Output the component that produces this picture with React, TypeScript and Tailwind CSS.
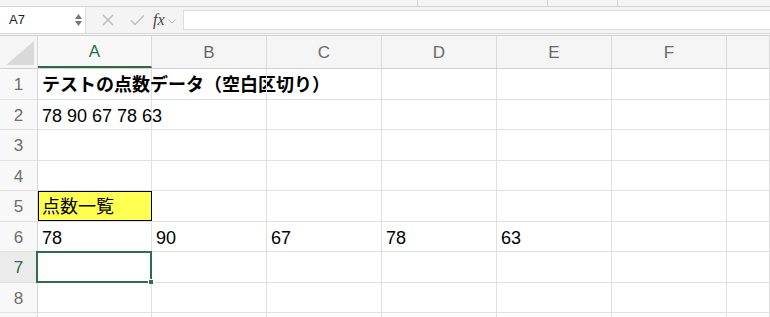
import React from 'react'

const cols = ['A', 'B', 'C', 'D', 'E', 'F', '']
const colW = ['w-[114px]', 'w-[115px]', 'w-[115px]', 'w-[115px]', 'w-[115px]', 'w-[115px]', 'flex-1']
const rowH = ['h-[31px]', 'h-[30px]', 'h-[31px]', 'h-[30px]', 'h-[31px]', 'h-[30px]', 'h-[31px]', 'h-[30px]', 'h-[31px]']

// セルの内容
const cells: Record<string, string> = {
  A1: 'テストの点数データ（空白区切り）',
  A2: '78 90 67 78 63',
  A5: '点数一覧',
  A6: '78',
  B6: '90',
  C6: '67',
  D6: '78',
  E6: '63',
}

const font = { fontFamily: '"Liberation Sans", "Noto Sans CJK JP", sans-serif' }

const App = () => {
  return (
    <div className="w-[770px] h-[317px] overflow-hidden bg-white text-black" style={font}>
      {/* ツールバーの名残り */}
      <div className="h-[7px] bg-[#f4f4f4] border-b border-[#d4d4d4] flex">
        <div className="w-[417px]" />
        <div className="w-px bg-[#d4d4d4]" />
        <div className="w-[129px]" />
        <div className="w-px bg-[#d4d4d4]" />
        <div className="w-[69px]" />
        <div className="w-px bg-[#d4d4d4]" />
      </div>

      {/* 数式バー */}
      <div className="h-[27px] bg-[#f4f4f4] flex items-stretch border-b border-[#d9d9d9]">
        <div className="w-[86px] bg-white border-r border-[#dcdcdc] flex items-center justify-between pl-[9px] pr-[3px]">
          <span className="text-[13px] text-[#222]">A7</span>
          <div className="flex flex-col items-center gap-[2px]">
            <svg width="7" height="5" viewBox="0 0 7 5"><path d="M3.5 0L7 5H0z" fill="#777" /></svg>
            <svg width="7" height="5" viewBox="0 0 7 5"><path d="M0 0h7L3.5 5z" fill="#777" /></svg>
          </div>
        </div>
        <div className="w-[97px] flex items-center pl-[16px]">
          <svg width="12" height="12" viewBox="0 0 12 12" className="mr-[16px]">
            <path d="M1 1L11 11M11 1L1 11" stroke="#bdbdbd" strokeWidth="1.5" />
          </svg>
          <svg width="15" height="12" viewBox="0 0 15 12" className="mr-[8px]">
            <path d="M1 6.5L5 10.5L14 1.5" stroke="#bdbdbd" strokeWidth="1.5" fill="none" />
          </svg>
          <span className="text-[16px] italic text-[#444] leading-none" style={{ fontFamily: '"Liberation Serif", serif' }}>fx</span>
          <svg width="8" height="5" viewBox="0 0 8 5" className="ml-[3px] mt-[2px]">
            <path d="M0.5 0.5L4 4L7.5 0.5" stroke="#b0b0b0" strokeWidth="1" fill="none" />
          </svg>
        </div>
        <div className="flex-1 my-[3px] bg-white border-y border-l border-[#dedede]" />
      </div>
      <div className="h-[2px] bg-[#f4f4f4] border-b border-[#d0d0d0]" />

      {/* 列見出し */}
      <div className="h-[33px] flex bg-[#f5f5f5] border-b border-[#d2d2d2]">
        <div className="w-[38px] border-r border-[#dadada] relative">
          <svg width="28" height="24" viewBox="0 0 28 24" className="absolute right-[3px] bottom-[3px]">
            <path d="M28 0V24H0z" fill="#d9d9d9" />
          </svg>
        </div>
        {cols.map((c, i) => (
          <div
            key={i}
            className={`${colW[i]} flex items-center justify-center pt-[1px] text-[17px] border-r border-[#dadada] ${
              c === 'A' ? 'text-[#1f7244] border-b-2 border-b-[#2c6b45] bg-[#f8f8f8]' : 'text-[#6a6a6a]'
            }`}
          >
            {c}
          </div>
        ))}
      </div>

      {/* 行 */}
      {rowH.map((h, r) => {
        const rowNum = r + 1
        const active = rowNum === 7
        return (
          <div key={r} className={`${h} flex border-b border-[#e0e0e0] ${active ? 'relative z-10' : ''}`}>
            <div
              className={`w-[38px] shrink-0 flex items-center justify-center pt-[2px] text-[17px] border-r border-[#d6d6d6] ${
                active ? 'bg-[#ebebeb] text-[#2c6e49]' : 'bg-[#f8f8f8] text-[#6d6d6d]'
              }`}
            >
              {rowNum < 9 ? rowNum : ''}
            </div>
            {cols.map((c, i) => {
              const key = c + rowNum
              const v = cells[key]
              const yellow = key === 'A5'
              const selected = key === 'A7'
              return (
                <div
                  key={i}
                  className={`${colW[i]} shrink-0 relative flex items-center border-r border-[#e0e0e0] ${
                    yellow ? 'bg-[#ffff4f] outline outline-1 outline-black -outline-offset-1' : ''
                  } ${selected ? 'z-10' : ''}`}
                >
                  {v && (
                    <span
                      className={`pl-[4px] pt-[2px] text-[18px] whitespace-nowrap leading-none ${rowNum === 1 ? 'font-bold' : ''}`}
                      style={{ fontFamily: '"Liberation Sans", "Noto Sans CJK JP", sans-serif' }}
                    >
                      {v}
                    </span>
                  )}
                  {selected && (
                    <div className="absolute -left-[2px] -top-[1px] -right-[1px] -bottom-[1px] border-2 border-[#2f6e4a]">
                      <div className="absolute -right-[4px] -bottom-[4px] w-[6px] h-[6px] bg-[#2f6e4a] border border-white" />
                    </div>
                  )}
                </div>
              )
            })}
          </div>
        )
      })}
    </div>
  )
}

export default App
